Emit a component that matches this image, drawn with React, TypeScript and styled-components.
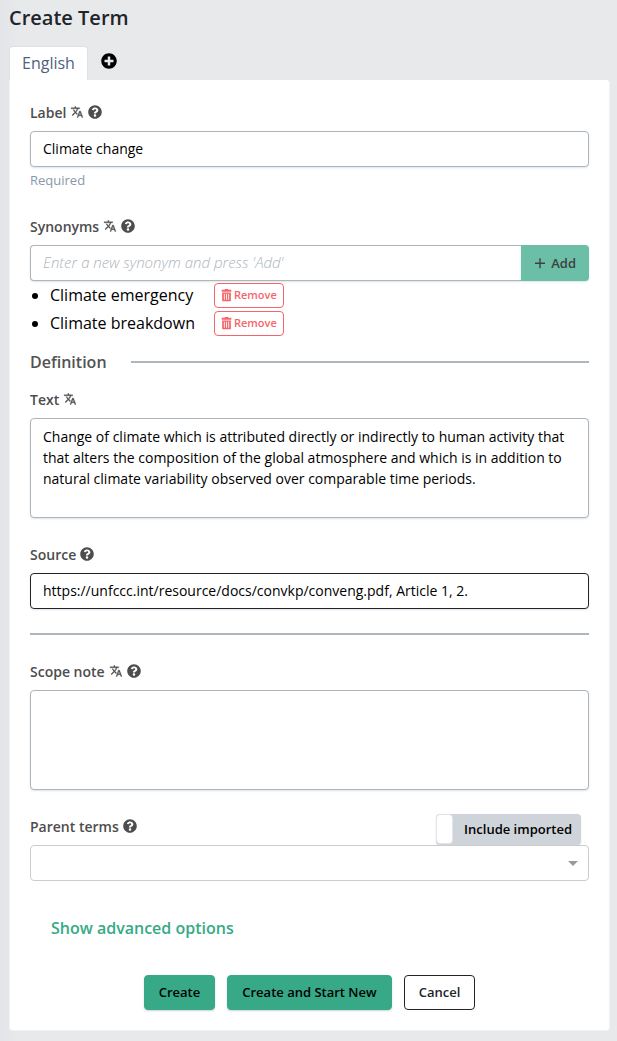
import React, { useState } from "react";
import styled, { createGlobalStyle, css } from "styled-components";
import { FaQuestionCircle, FaPlusCircle } from "react-icons/fa";

const GlobalStyle = createGlobalStyle`
  *, *::before, *::after { box-sizing: border-box; }
  body {
    margin: 0;
    background: #e8e9eb;
    color: #000;
    font-family: "Open Sans", "Noto Sans", sans-serif;
    font-size: 16px;
  }
  button, input, textarea, select { font-family: inherit; }
`;

const Page = styled.main`
  padding: 6px 7px 11px 9px;
  background: linear-gradient(to right, #e4e5e8, #e8e9eb 20px);
`;

const Title = styled.h1`
  margin: 0 0 16px;
  font-size: 20px;
  line-height: 24px;
  font-weight: 600;
  color: #212529;
`;

const Tabs = styled.nav`
  display: flex;
  align-items: flex-start;
`;

const Tab = styled.button`
  height: 34px;
  padding: 0 12px 1px;
  border: 1px solid #dee2e6;
  border-bottom: 0;
  border-radius: 4px 4px 0 0;
  background: #fff;
  color: #525f7f;
  font-size: 16px;
`;

const AddTab = styled.button`
  display: flex;
  margin-left: 13px;
  padding: 7px 0;
  border: 0;
  background: none;
  color: #000;
  font-size: 16px;
`;

const Card = styled.form`
  padding: 20px;
  border: 1px solid #f1f2f3;
  border-top-width: 0;
  border-radius: 0 4px 4px 4px;
  background: #fff;
`;

const Group = styled.div<{ $flush?: boolean }>`
  margin-bottom: ${(p) => (p.$flush ? "0" : "24px")};
`;

const LabelRow = styled.div`
  display: flex;
  align-items: flex-start;
  height: 31px;
  gap: 4px;
  color: #4d4d4d;
  font-size: 14px;
`;

const LabelText = styled.label`
  font-weight: 600;
  line-height: 26px;
`;

const LabelIcon = styled.span`
  display: flex;
  align-items: center;
  height: 24px;
`;

const control = css`
  display: block;
  width: 100%;
  border: 1px solid #adb5bd;
  border-radius: 4px;
  background: #fff;
  color: #000;
  font-size: 14px;
  line-height: 21px;
  outline: 0;
  box-shadow: 0 1px 2px rgba(50, 80, 110, 0.15);
`;

const Input = styled.input<{ $active?: boolean }>`
  ${control}
  height: 36px;
  padding: 6px 12px 7px;
  border-color: ${(p) => (p.$active ? "#212529" : "#adb5bd")};
  &::placeholder {
    color: #adb5bd;
    font-size: 15px;
    font-style: italic;
    font-weight: 300;
    opacity: 1;
  }
`;

const TextArea = styled.textarea`
  ${control}
  height: 100px;
  padding: 7px 12px;
  resize: none;
`;

const Hint = styled.small`
  display: block;
  margin-top: 4px;
  color: #8898aa;
  font-size: 13px;
  line-height: 19px;
`;

const InputGroup = styled.div`
  display: flex;
  ${Input} {
    flex: 1;
    min-width: 0;
    border-right: 0;
    border-radius: 4px 0 0 4px;
  }
`;

const AddButton = styled.button`
  display: flex;
  align-items: center;
  gap: 5px;
  padding: 0 13px;
  border: 0;
  border-radius: 0 4px 4px 0;
  background: #6abfa6;
  color: #404040;
  font-size: 13px;
  font-weight: 600;
  box-shadow: 0 1px 2px rgba(50, 80, 110, 0.15);
`;

const SynonymList = styled.ul`
  margin: 0;
  padding-left: 20px;
`;

const Synonym = styled.li`
  height: 28px;
  font-size: 16px;
  line-height: 28px;
`;

const SynonymRow = styled.div`
  display: flex;
  align-items: center;
  gap: 14px;
`;

const SynonymText = styled.span`
  min-width: 150px;
`;

const RemoveButton = styled.button`
  display: flex;
  align-items: center;
  gap: 2px;
  height: 25px;
  padding: 0 6px 1px;
  border: 1px solid #f5656b;
  border-radius: 4px;
  background: #fff;
  color: #f5656b;
  font-size: 11px;
  font-weight: 600;
`;

const SectionHeading = styled.h2`
  display: flex;
  align-items: center;
  gap: 24px;
  margin: 13px 0;
  color: #525252;
  font-size: 16px;
  font-weight: 600;
  line-height: 24px;
  &::after {
    content: "";
    flex: 1;
    height: 2px;
    background: #adb5bd;
  }
`;

const Divider = styled.hr`
  height: 2px;
  margin: 0 0 24px;
  border: 0;
  background: #adb5bd;
`;

const Toggle = styled.label`
  display: flex;
  align-items: center;
  height: 31px;
  margin: 0 8px 0 auto;
  padding: 0 9px 1px 0;
  border-radius: 4px;
  background: #ced4da;
  color: #000;
  font-size: 13px;
  font-weight: 600;
  line-height: 18px;
  box-shadow: 0 1px 2px rgba(50, 80, 110, 0.15);
`;

const ToggleBox = styled.input`
  appearance: none;
  width: 17px;
  height: 30px;
  margin: 0 11px 0 0;
  border: 1px solid #e1e5e8;
  border-radius: 4px;
  background: #fff;
`;

const SelectBox = styled.div`
  display: grid;
  align-items: center;
  > * { grid-area: 1 / 1; }
`;

const Select = styled.select`
  appearance: none;
  width: 100%;
  height: 36px;
  padding: 0 12px;
  border: 1px solid #ccc;
  border-radius: 4px;
  background: #fff;
  font-size: 14px;
`;

const Caret = styled.svg`
  justify-self: end;
  margin-right: 11px;
  pointer-events: none;
`;

const Advanced = styled.button`
  display: block;
  height: 46px;
  margin-bottom: 24px;
  padding: 0 21px;
  border: 0;
  background: none;
  color: #37a987;
  font-size: 16px;
  font-weight: 600;
`;

const Actions = styled.div`
  display: flex;
  justify-content: center;
  gap: 12px;
`;

const ActionButton = styled.button<{ $outline?: boolean }>`
  height: 35px;
  padding: 0 14px 1px;
  border: 1px solid ${(p) => (p.$outline ? "#212529" : "#37a987")};
  border-radius: 4px;
  background: ${(p) => (p.$outline ? "#fff" : "#37a987")};
  color: ${(p) => (p.$outline ? "#212529" : "#000")};
  font-size: 13px;
  font-weight: 600;
  box-shadow: ${(p) => (p.$outline ? "none" : "0 1px 2px rgba(50, 80, 110, 0.25)")};
`;

const PlusIcon = () => (
  <svg width="12" height="16" viewBox="0 0 12 16" fill="currentColor" aria-hidden="true">
    <path d="M11 9H6.7v4.300H5.300V9H1V7.600h4.300V3.300h1.400v4.300H11z" />
  </svg>
);

const TranslateIcon = () => (
  <svg
    width="14"
    height="14"
    viewBox="0 0 26 26"
    fill="currentColor"
    stroke="currentColor"
    strokeWidth="0.6"
    aria-hidden="true"
  >
    <path d="M13.87 16.07l-2.54-2.51.03-.03c1.74-1.94 2.98-4.17 3.71-6.53H18V5h-7V3H9v2H2v1.99h11.17C12.5 8.92 11.44 10.75 10 12.35 9.07 11.32 8.3 10.19 7.69 9h-2c.73 1.63 1.73 3.17 2.98 4.56l-5.09 5.02L5 20l5-5 3.11 3.11.76-2.04zM19.5 11h-2L13 23h2l1.12-3h4.75L22 23h2l-4.5-12zm-2.62 7l1.62-4.33L20.12 18h-3.24z" />
  </svg>
);

const TrashIcon = () => (
  <svg width="11" height="14" viewBox="0 0 12 16" fill="currentColor" aria-hidden="true">
    <path
      fillRule="evenodd"
      d="M4 2V1h4v1h3.5v2.3H.5V2zM1 5h10v9.5c0 .3-.2.5-.5.5h-9c-.3 0-.5-.2-.5-.5zm2 1.500v7h1v-7zm2.500 0v7h1v-7zm2.500 0v7h1v-7z"
    />
  </svg>
);

type FieldLabelProps = {
  htmlFor: string;
  text: string;
  translatable?: boolean;
  help?: boolean;
  children?: React.ReactNode;
};

const FieldLabel = ({ htmlFor, text, translatable, help, children }: FieldLabelProps) => (
  <LabelRow>
    <LabelText htmlFor={htmlFor}>{text}</LabelText>
    {translatable && (
      <LabelIcon>
        <TranslateIcon />
      </LabelIcon>
    )}
    {help && (
      <LabelIcon>
        <FaQuestionCircle size={14} />
      </LabelIcon>
    )}
    {children}
  </LabelRow>
);

const definition =
  "Change of climate which is attributed directly or indirectly to human activity that that alters the composition of the global atmosphere and which is in addition to natural climate variability observed over comparable time periods.";

export default function App() {
  const [synonyms, setSynonyms] = useState(["Climate emergency", "Climate breakdown"]);
  const [draft, setDraft] = useState("");

  const addSynonym = () => {
    if (!draft.trim()) return;
    setSynonyms([...synonyms, draft.trim()]);
    setDraft("");
  };

  return (
    <>
      <GlobalStyle />
      <Page>
        <Title>Create Term</Title>
        <Tabs>
          <Tab type="button">English</Tab>
          <AddTab type="button" aria-label="Add language">
            <FaPlusCircle />
          </AddTab>
        </Tabs>
        <Card onSubmit={(e) => e.preventDefault()}>
          <Group>
            <FieldLabel htmlFor="label" text="Label" translatable help />
            <Input id="label" defaultValue="Climate change" />
            <Hint>Required</Hint>
          </Group>
          <Group $flush>
            <FieldLabel htmlFor="synonyms" text="Synonyms" translatable help />
            <InputGroup>
              <Input
                id="synonyms"
                placeholder="Enter a new synonym and press 'Add'"
                value={draft}
                onChange={(e) => setDraft(e.target.value)}
              />
              <AddButton type="button" onClick={addSynonym}>
                <PlusIcon />
                Add
              </AddButton>
            </InputGroup>
            <SynonymList>
              {synonyms.map((s) => (
                <Synonym key={s}>
                  <SynonymRow>
                    <SynonymText>{s}</SynonymText>
                    <RemoveButton
                      type="button"
                      onClick={() => setSynonyms(synonyms.filter((x) => x !== s))}
                    >
                      <TrashIcon />
                      Remove
                    </RemoveButton>
                  </SynonymRow>
                </Synonym>
              ))}
            </SynonymList>
          </Group>
          <SectionHeading>Definition</SectionHeading>
          <Group>
            <FieldLabel htmlFor="definition" text="Text" translatable />
            <TextArea id="definition" defaultValue={definition} />
          </Group>
          <Group>
            <FieldLabel htmlFor="source" text="Source" help />
            <Input
              id="source"
              $active
              defaultValue="https://unfccc.int/resource/docs/convkp/conveng.pdf, Article 1, 2."
            />
          </Group>
          <Divider />
          <Group>
            <FieldLabel htmlFor="scope" text="Scope note" translatable help />
            <TextArea id="scope" />
          </Group>
          <Group>
            <FieldLabel htmlFor="parents" text="Parent terms" help>
              <Toggle>
                <ToggleBox type="checkbox" />
                Include imported
              </Toggle>
            </FieldLabel>
            <SelectBox>
              <Select id="parents" />
              <Caret width="10" height="5" viewBox="0 0 10 5" aria-hidden="true">
                <path d="M0 0h10L5 5z" fill="#999" />
              </Caret>
            </SelectBox>
          </Group>
          <Advanced type="button">Show advanced options</Advanced>
          <Actions>
            <ActionButton type="submit">Create</ActionButton>
            <ActionButton type="button">Create and Start New</ActionButton>
            <ActionButton type="button" $outline>
              Cancel
            </ActionButton>
          </Actions>
        </Card>
      </Page>
    </>
  );
}
